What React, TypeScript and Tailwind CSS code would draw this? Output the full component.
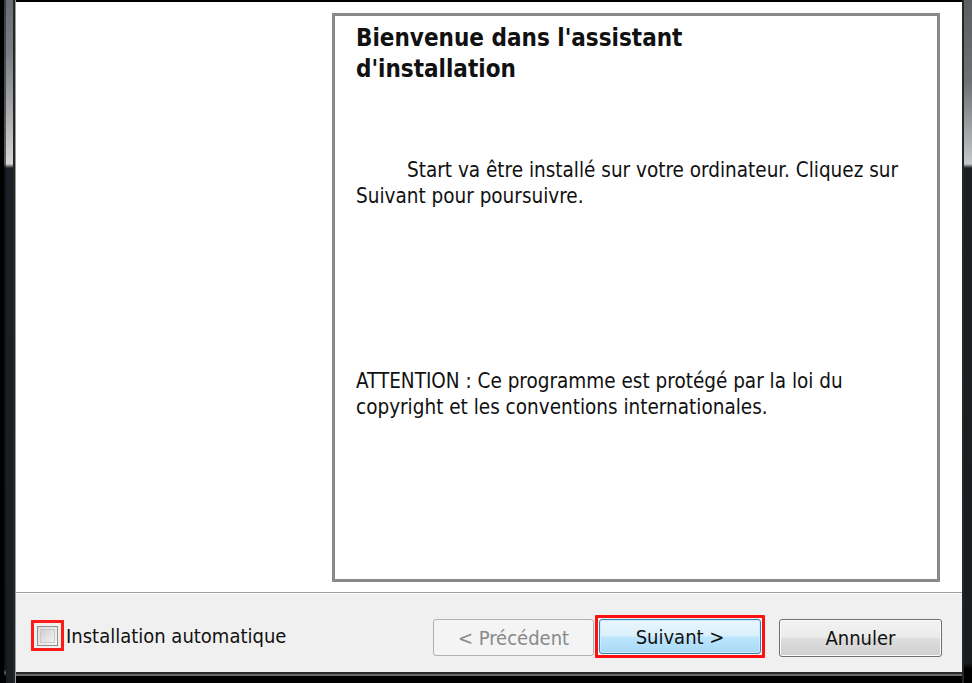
export default function App() {
  const ui = { fontFamily: '"DejaVu Sans Condensed", "DejaVu Sans", sans-serif' };

  return (
    <div className="flex h-[683px] w-[972px] overflow-hidden bg-black text-[#111]" style={ui}>
      {/* left window frame */}
      <div className="flex w-[16px] shrink-0">
        <div className="w-[4px] bg-black" />
        <div className="w-[2px] bg-[linear-gradient(to_bottom,#3c3c3c_0%,#5c5c5c_24%,#111_24.6%,#111_98%,#5a5a5a_98.5%,#000_99%)]" />
        <div className="w-[7px] bg-[linear-gradient(to_bottom,#6a6e72_0%,#7c8084_8%,#b8babc_19%,#d4d6d8_24%,#1c2024_24.6%,#1a1d20_100%)]" />
        <div className="w-[2px] bg-[#262626]" />
        <div className="w-[1px] bg-[#9a9a9a]" />
      </div>

      {/* window body */}
      <div className="flex min-w-0 flex-1 flex-col">
        <div className="h-[2px] bg-black" />

        <div className="flex h-[590px] bg-white pl-[316px] pr-[22px] pt-[11px]">
          <div className="h-[569px] flex-1 border-[3px] border-[#8a8a8a] bg-white pl-[21px] pr-[30px] pt-[7px]">
            <h1 className="text-[24px] font-bold leading-[31px]">
              Bienvenue dans l'assistant
              <br />
              d'installation
            </h1>
            <p className="mt-[72px] text-[20.5px] leading-[26px]">
              <span className="inline-block w-[51px]" />
              Start va être installé sur votre ordinateur. Cliquez sur Suivant pour poursuivre.
            </p>
            <p className="mt-[159px] text-[20.5px] leading-[26px]">
              ATTENTION : Ce programme est protégé par la loi du copyright et les conventions internationales.
            </p>
          </div>
        </div>

        <div className="h-[1px] bg-[#a0a0a0]" />
        <div className="h-[1px] bg-white" />

        <div className="flex h-[78px] items-start bg-[#f0f0f0] pl-[15px] pr-[20px] pt-[25px]">
          <div className="flex items-start">
            <div className="mt-[1px] flex h-[31px] w-[33px] items-center justify-center border-[3px] border-[#ff1a1a]">
              <div className="h-[20px] w-[21px] border border-[#8e8f8f] bg-[linear-gradient(135deg,#dcdcdc,#f6f6f6)] p-[2px]">
                <div className="h-full w-full border border-[#c8c8c8] bg-[linear-gradient(135deg,#cfcfcf,#f2f2f2)]" />
              </div>
            </div>
            <span className="ml-[2px] mt-[4px] text-[20px] leading-[26px]">Installation automatique</span>
          </div>

          <div className="ml-auto flex items-start">
            <button
              disabled
              className="h-[37px] w-[161px] rounded-[3px] border border-[#adb2b5] bg-[#f4f4f4] text-[20px] text-[#8a8a8a]"
            >
              &lt; Précédent
            </button>
            <div className="-mt-[4px] ml-[1px] rounded-[1px] border-[3px] border-[#ff1010] p-[1px]">
              <button className="h-[35px] w-[162px] rounded-[3px] border border-[#3c7fb1] bg-[linear-gradient(to_bottom,#eaf6fd_0%,#d9f0fc_48%,#bee6fd_52%,#a7d9f5_100%)] text-[20px] shadow-[inset_0_0_0_1px_#c9ecff]">
                Suivant &gt;
              </button>
            </div>
            <button className="ml-[14px] h-[38px] w-[163px] rounded-[3px] border border-[#707070] bg-[linear-gradient(to_bottom,#f2f2f2_0%,#ebebeb_48%,#dddddd_52%,#cfcfcf_100%)] text-[20px] shadow-[inset_0_0_0_1px_#fcfcfc]">
              Annuler
            </button>
          </div>
        </div>

        <div className="h-[2px] bg-[#2a2a2a]" />
        <div className="h-[2px] bg-[#6a6a6a]" />
        <div className="flex-1 bg-black" />
      </div>

      {/* right window frame */}
      <div className="flex w-[10px] shrink-0">
        <div className="w-[2px] bg-[#262626]" />
        <div className="w-[8px] bg-[linear-gradient(to_bottom,#5c6064_0%,#6e7276_12%,#a8abae_20%,#c6c8ca_24%,#1c2024_24.6%,#1a1d20_97%,#000_98%)]" />
      </div>
    </div>
  );
}
